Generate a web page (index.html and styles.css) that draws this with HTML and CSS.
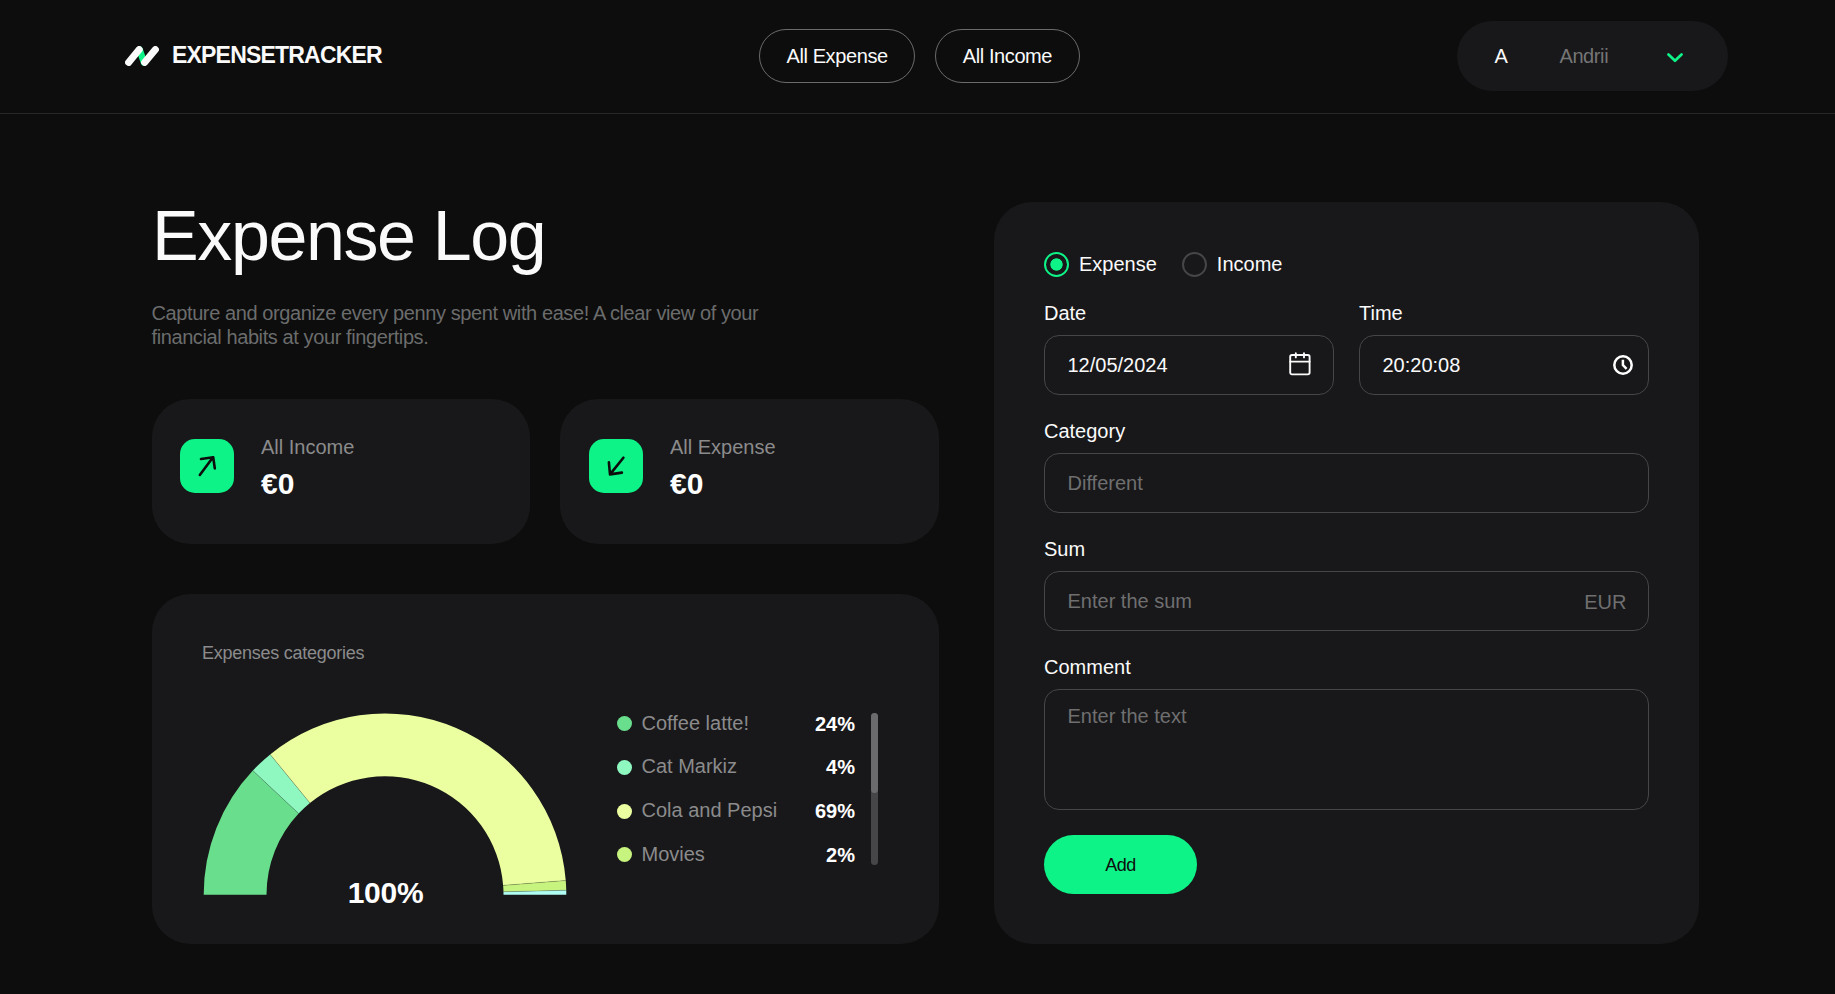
FILE: index.html
```html
<!DOCTYPE html>
<html lang="en">
<head>
<meta charset="utf-8">
<title>ExpenseTracker</title>
<link rel="stylesheet" href="styles.css">
</head>
<body>
<header class="header">
  <a class="logo">
    <svg class="logo-mark" width="34" height="20" viewBox="0 0 34 20">
      <path d="M14.6 3.6 19 16.4" stroke="#0ef387" stroke-width="6.6" stroke-linecap="round"/>
      <path d="M3.6 16.4 14.2 3.6M19.6 16.4 30.4 3.6" stroke="#fafafa" stroke-width="7" stroke-linecap="round"/>
    </svg>
    <span class="logo-text">EXPENSETRACKER</span>
  </a>
  <nav class="nav">
    <a class="nav-link">All Expense</a>
    <a class="nav-link">All Income</a>
  </nav>
  <button class="user">
    <span class="user-letter">A</span>
    <span class="user-name">Andrii</span>
    <svg class="user-chevron" width="16" height="10" viewBox="0 0 16 10" fill="none"><path d="M1.5 1.5 8 7.8 14.5 1.5" stroke="#0ef387" stroke-width="2.7" stroke-linecap="round" stroke-linejoin="round"/></svg>
  </button>
</header>
<main class="main">
  <section class="left">
    <h1 class="title">Expense Log</h1>
    <p class="subtitle">Capture and organize every penny spent with ease! A clear view of your financial habits at your fingertips.</p>
    <div class="totals">
      <article class="total">
        <span class="total-icon"><svg width="54" height="54" viewBox="0 0 54 54" fill="none" stroke="#0d0d0d" stroke-width="2.6" stroke-linecap="round" stroke-linejoin="round"><path d="M19.8 36 33 18.3M21 20l12.2-1.8 1.6 11.2"/></svg></span>
        <div class="total-body"><span class="total-label">All Income</span><strong class="total-value">€0</strong></div>
      </article>
      <article class="total">
        <span class="total-icon"><svg width="54" height="54" viewBox="0 0 54 54" fill="none" stroke="#0d0d0d" stroke-width="2.6" stroke-linecap="round" stroke-linejoin="round"><path d="M34.4 18.7 21 35.4M19.9 23.4l1.1 12 11.9-1.8"/></svg></span>
        <div class="total-body"><span class="total-label">All Expense</span><strong class="total-value">€0</strong></div>
      </article>
    </div>
    <article class="categories">
      <h2 class="categories-title">Expenses categories</h2>
      <div class="categories-body">
        <div class="chart">
          <svg width="364" height="182" viewBox="-182 -181.7 364 182" id="donut"></svg>
          <strong class="chart-value">100%</strong>
        </div>
        <ul class="legend">
          <li class="legend-item"><i class="dot dot-green"></i><span class="legend-name">Coffee latte!</span><b class="legend-value">24%</b></li>
          <li class="legend-item"><i class="dot dot-mint"></i><span class="legend-name">Cat Markiz</span><b class="legend-value">4%</b></li>
          <li class="legend-item"><i class="dot dot-yellow"></i><span class="legend-name">Cola and Pepsi</span><b class="legend-value">69%</b></li>
          <li class="legend-item"><i class="dot dot-lime"></i><span class="legend-name">Movies</span><b class="legend-value">2%</b></li>
        </ul>
        <div class="scrollbar"><div class="scrollbar-thumb"></div></div>
      </div>
    </article>
  </section>
  <form class="form">
    <div class="radios">
      <label class="radio"><i class="radio-mark radio-checked"></i><span class="radio-text">Expense</span></label>
      <label class="radio"><i class="radio-mark"></i><span class="radio-text">Income</span></label>
    </div>
    <div class="row">
      <label class="field"><span class="field-label">Date</span>
        <span class="control">12/05/2024
          <svg class="icon-calendar" width="22" height="24" viewBox="0 0 22 24" fill="none" stroke="#fafafa" stroke-width="1.9" stroke-linecap="round" stroke-linejoin="round"><rect x="1.2" y="3" width="19.4" height="19.4" rx="1.8"/><path d="M1.2 9.6h19.4M6.8 1.2v4.2M15 1.2v4.2"/></svg>
        </span>
      </label>
      <label class="field"><span class="field-label">Time</span>
        <span class="control">20:20:08
          <svg class="icon-clock" width="20" height="20" viewBox="0 0 20 20" fill="none" stroke="#fff" stroke-width="2.5"><circle cx="10" cy="10" r="8.7"/><path d="M9.9 4.8V10l3.7 3.8"/></svg>
        </span>
      </label>
    </div>
    <label class="field"><span class="field-label">Category</span><span class="control muted">Different</span></label>
    <label class="field"><span class="field-label">Sum</span><span class="control muted">Enter the sum<span class="currency">EUR</span></span></label>
    <label class="field"><span class="field-label">Comment</span><span class="control control-area muted">Enter the text</span></label>
    <button class="submit" type="button">Add</button>
  </form>
</main>
<script src="chart.js"></script>
</body>
</html>
```

FILE: styles.css
```css
* { box-sizing: border-box; }

body {
  margin: 0;
  height: 994px;
  overflow: hidden;
  background: #0d0d0d;
  color: #fafafa;
  font: 20px/24px "Liberation Sans", Arial, sans-serif;
}

button { border: 0; font: inherit; color: inherit; }

.header {
  display: grid;
  grid-template-columns: 634px auto 1fr;
  align-items: center;
  height: 114px;
  padding: 0 107px 2px 125px;
  border-bottom: 1px solid #272728;
}

.logo { display: flex; align-items: center; gap: 13px; }
.logo-mark { fill: none; }
.logo-text { font-weight: 700; font-size: 23px; line-height: 26px; letter-spacing: -0.8px; margin-top: -2px; }

.nav { display: flex; gap: 20px; }
.nav-link {
  height: 54px;
  padding: 15px 26.5px;
  border: 1px solid #6b6b6b;
  border-radius: 27px;
  line-height: 23px;
  letter-spacing: -0.4px;
}

.user {
  justify-self: end;
  display: flex;
  align-items: center;
  width: 271px;
  height: 70px;
  padding: 0 45.5px 0 37.5px;
  border-radius: 35px;
  background: #18181a;
  letter-spacing: -0.4px;
}
.user-name { margin-left: 52px; color: #757576; }
.user-chevron { margin-left: auto; margin-top: 4px; }

.main {
  display: grid;
  grid-template-columns: 787px 705px;
  gap: 55px;
  padding: 83px 0 0 152px;
}

.title { margin: 0; font-weight: 400; font-size: 70px; line-height: 78px; letter-spacing: -1.4px; }
.subtitle { margin: 26px 0 50px -0.5px; width: 640px; color: #6b6c6c; letter-spacing: -0.4px; }

.totals { display: grid; grid-template-columns: 378px 379px; gap: 30px; }
.total {
  display: flex;
  gap: 27px;
  height: 145px;
  padding: 40px 28px;
  border-radius: 38px;
  background: #18181a;
}
.total + .total { padding-left: 29px; }
.total-icon { width: 54px; height: 54px; border-radius: 15px; background: #0ef387; }
.total-body { display: flex; flex-direction: column; gap: 8px; margin-top: -4px; }
.total-label { color: #8b8b8c; }
.total-value { font-size: 30px; line-height: 34px; color: #fff; }

.categories {
  height: 350px;
  margin-top: 50px;
  padding: 48px 50px 0;
  border-radius: 38px;
  background: #18181a;
}
.categories-title { margin: 0; font-weight: 400; font-size: 18px; line-height: 22px; letter-spacing: -0.25px; color: #8b8b8c; }
.categories-body { display: flex; margin-top: 49px; }
.chart { position: relative; width: 364px; height: 182px; margin-left: 0.5px; }
.chart svg { display: block; }
.chart-value { position: absolute; left: 0; right: 0; bottom: -15px; padding-left: 2px; text-align: center; font-size: 30px; line-height: 34px; letter-spacing: -0.3px; color: #fff; }

.legend { display: flex; flex-direction: column; gap: 19.75px; width: 238px; margin: -2px 0 0 50.5px; padding: 0; list-style: none; }
.legend-item { display: flex; align-items: center; height: 24px; }
.dot { width: 15px; height: 15px; margin: 1px 9.5px 0 0; border-radius: 50%; }
.dot-green { background: #69de8c; }
.dot-mint { background: #8ff8c1; }
.dot-yellow { background: #ebffa0; }
.dot-lime { background: #c7f37f; }
.legend-name { margin-top: -0.8px; color: #8b8b8c; }
.legend-value { margin: 1px 0 0 auto; color: #fff; }

.scrollbar { width: 7px; height: 152px; margin-left: 16px; border-radius: 3.5px; background: #464648; }
.scrollbar-thumb { height: 80px; border-radius: 3.5px; background: #6b6b6d; }

.form {
  display: flex;
  flex-direction: column;
  gap: 25px;
  height: 742px;
  margin-top: 5px;
  padding: 50px;
  border-radius: 38px;
  background: #18181a;
}
.radios { display: flex; gap: 25px; height: 25px; }
.radio { display: flex; align-items: center; gap: 10px; }
.radio-text { margin-bottom: 2px; }
.radio-mark { width: 25px; height: 25px; border: 2px solid #464648; border-radius: 50%; }
.radio-checked { border-color: #0ef387; background: radial-gradient(circle, #0ef387 5.8px, transparent 6.5px); }

.row { display: grid; grid-template-columns: 1fr 1fr; gap: 25px; }
.field { display: flex; flex-direction: column; }
.field-label { height: 33px; line-height: 22px; }
.control {
  display: flex;
  align-items: center;
  justify-content: space-between;
  height: 60px;
  padding: 0 22.5px;
  border: 1px solid #464648;
  border-radius: 15px;
}
.muted { color: #6f6f70; }
.icon-calendar { margin-top: -3px; }
.icon-clock { margin-right: -7px; }
.currency { margin: 2px -1px 0 0; }
.control-area { align-items: flex-start; height: 121px; padding-top: 14px; }

.submit {
  width: 153px;
  height: 59px;
  border-radius: 30px;
  background: #0ef387;
  color: #0d0d0d;
  font-size: 18px;
  letter-spacing: -0.5px;
}
```

FILE: chart.js
```js
// Half-donut: every slice is given by its start and end angle, in degrees from the left end.
const slices = [
  [0, 43.2, '#69de8c'],
  [43.2, 50.7, '#8ff8c1'],
  [50.7, 175.5, '#ebffa0'],
  [175.5, 178.6, '#c7f37f'],
  [178.6, 180, '#b0fdf3'],
];
const OUTER = 181.3;
const INNER = 118.5;
const at = (r, deg) => {
  const a = (deg * Math.PI) / 180;
  return `${-r * Math.cos(a)} ${-r * Math.sin(a)}`;
};
document.getElementById('donut').innerHTML =
  slices.map(([from, to, color]) =>
    `<path fill="${color}" d="M${at(OUTER, from)}A${OUTER} ${OUTER} 0 0 1 ${at(OUTER, to)}L${at(INNER, to)}A${INNER} ${INNER} 0 0 0 ${at(INNER, from)}Z"/>`
  ).join('') +
  slices.slice(1).map(([from]) =>
    `<path stroke="#18181a" stroke-opacity=".25" stroke-width=".8" d="M${at(OUTER, from)}L${at(INNER, from)}"/>`
  ).join('');
```
